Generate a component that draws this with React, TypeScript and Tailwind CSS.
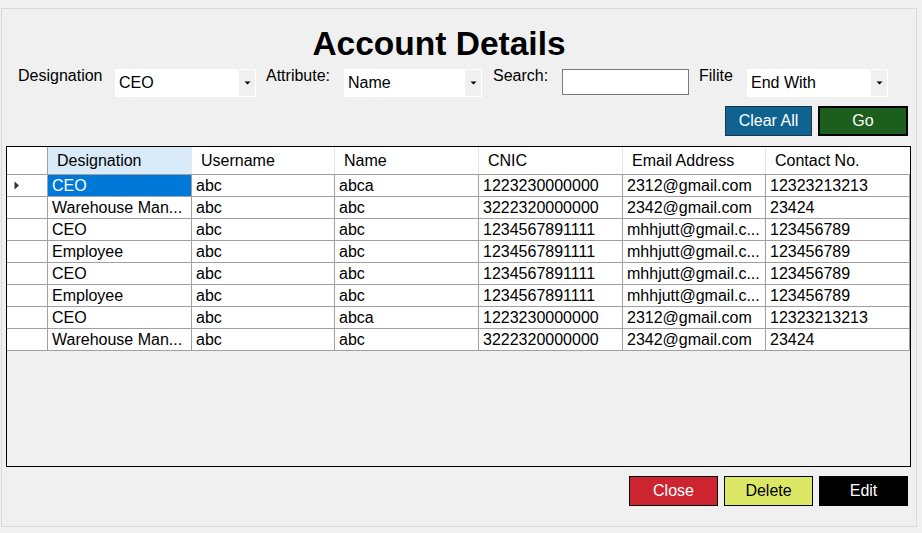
import React from "react";

type Row = {
  designation: string;
  username: string;
  name: string;
  cnic: string;
  email: string;
  contact: string;
};

const rows: Row[] = [
  { designation: "CEO", username: "abc", name: "abca", cnic: "1223230000000", email: "2312@gmail.com", contact: "12323213213" },
  { designation: "Warehouse Man...", username: "abc", name: "abc", cnic: "3222320000000", email: "2342@gmail.com", contact: "23424" },
  { designation: "CEO", username: "abc", name: "abc", cnic: "1234567891111", email: "mhhjutt@gmail.c...", contact: "123456789" },
  { designation: "Employee", username: "abc", name: "abc", cnic: "1234567891111", email: "mhhjutt@gmail.c...", contact: "123456789" },
  { designation: "CEO", username: "abc", name: "abc", cnic: "1234567891111", email: "mhhjutt@gmail.c...", contact: "123456789" },
  { designation: "Employee", username: "abc", name: "abc", cnic: "1234567891111", email: "mhhjutt@gmail.c...", contact: "123456789" },
  { designation: "CEO", username: "abc", name: "abca", cnic: "1223230000000", email: "2312@gmail.com", contact: "12323213213" },
  { designation: "Warehouse Man...", username: "abc", name: "abc", cnic: "3222320000000", email: "2342@gmail.com", contact: "23424" },
];

const headers = ["Designation", "Username", "Name", "CNIC", "Email Address", "Contact No."];
const colWidths = ["w-[144px]", "w-[143px]", "w-[144px]", "w-[144px]", "w-[143px]", "w-[144px]"];

function Combo({ value, width }: { value: string; width: string }) {
  return (
    <div className={`${width} h-[28px] mt-[2px] bg-white border border-white flex`}>
      <div className="flex-1 pl-[3px] pt-[4px] text-[16px] leading-[18px] text-black">{value}</div>
      <div className="w-[16px] h-full bg-[#f0f0f0] flex items-center justify-center">
        <svg width="7" height="4" viewBox="0 0 7 4">
          <path d="M0.5 0.5 L6.5 0.5 L3.5 3.5 Z" fill="#000" />
        </svg>
      </div>
    </div>
  );
}

function Label({ text, width, className = "" }: { text: string; width: string; className?: string }) {
  return <div className={`${width} ${className} text-[16px] leading-[18px] text-black`}>{text}</div>;
}

export default function App() {
  return (
    <div
      className="w-[922px] h-[533px] bg-[#f0f0f0] pt-[8px] pl-[1px] overflow-hidden"
      style={{ fontFamily: '"Liberation Sans", Arial, sans-serif' }}
    >
      <div className="w-[916px] h-[519px] border border-[#dadada] flex flex-col">
        <h1 className="mt-[17px] h-[36px] text-center text-[33.5px] leading-[36px] font-bold text-black pr-[40px]">
          Account Details
        </h1>

        <div className="flex items-start pl-[16px] mt-[5px]">
          <Label text="Designation" width="w-[97px]" />
          <Combo value="CEO" width="w-[141px]" />
          <Label text="Attribute:" width="w-[78px]" className="ml-[10px]" />
          <Combo value="Name" width="w-[138px]" />
          <Label text="Search:" width="w-[69px]" className="ml-[11px]" />
          <div className="w-[127px] h-[26px] mt-[2px] bg-white border border-[#7a7a7a]" />
          <Label text="Filite" width="w-[48px]" className="ml-[10px]" />
          <Combo value="End With" width="w-[141px]" />
        </div>

        <div className="flex justify-end gap-[6px] pr-[8px] mt-[9px]">
          <button className="w-[87px] h-[30px] bg-[#106391] border border-[#1d3548] text-white text-[16px]">
            Clear All
          </button>
          <button className="w-[90px] h-[30px] bg-[#1c5e1c] border-2 border-black text-white text-[16px]">
            Go
          </button>
        </div>

        <div className="ml-[4px] mt-[10px] w-[905px] h-[321px] border border-black bg-[#f0f0f0] flex flex-col">
          <div className="flex h-[28px] bg-white border-b border-[#a0a0a0]">
            <div className="w-[41px] border-r border-[#a0a0a0]" />
            {headers.map((h, i) => (
              <div
                key={h}
                className={`${colWidths[i]} ${i === 0 ? "bg-[#d9ebf9]" : ""} ${i < 5 ? "border-r border-[#e5e5e5]" : ""} pl-[9px] flex items-center text-[16px] text-black`}
              >
                {h}
              </div>
            ))}
          </div>
          {rows.map((r, idx) => {
            const cells = [r.designation, r.username, r.name, r.cnic, r.email, r.contact];
            return (
              <div key={idx} className="flex h-[22px] bg-white border-b border-[#a0a0a0]">
                <div className="w-[41px] border-r border-[#a0a0a0] flex items-center pl-[7px]">
                  {idx === 0 && (
                    <svg width="6" height="9" viewBox="0 0 6 9">
                      <path d="M0.5 0.5 L5 4.5 L0.5 8.5 Z" fill="#333" />
                    </svg>
                  )}
                </div>
                {cells.map((c, i) => (
                  <div
                    key={i}
                    className={`${colWidths[i]} border-r border-[#a0a0a0] flex items-center pl-[4px] pt-[1px] text-[16px] whitespace-nowrap overflow-hidden ${
                      idx === 0 && i === 0 ? "bg-[#0078d7] text-white" : "text-black"
                    }`}
                  >
                    {c}
                  </div>
                ))}
              </div>
            );
          })}
        </div>

        <div className="flex justify-end gap-[6px] pr-[8px] mt-[9px]">
          <button className="w-[89px] h-[30px] bg-[#cc2530] border border-black text-white text-[16px]">
            Close
          </button>
          <button className="w-[89px] h-[30px] bg-[#dce865] border border-black text-black text-[16px]">
            Delete
          </button>
          <button className="w-[89px] h-[30px] bg-black text-white text-[16px]">Edit</button>
        </div>
      </div>
    </div>
  );
}
